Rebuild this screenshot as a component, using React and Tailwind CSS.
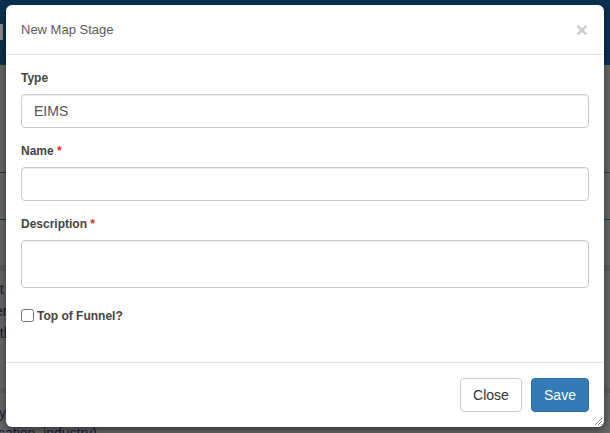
import React from 'react';

const Field = ({ label, required, children, className = '' }) => (
  <div className={className}>
    <label className="block h-[17px] leading-[17px] mb-[7px] text-[12px] font-bold text-[#444]">
      {label}
      {required && <span className="text-[#e02b27]"> *</span>}
    </label>
    {children}
  </div>
);

const ResizeGrip = () => (
  <svg width="9" height="9" viewBox="0 0 9 9" className="absolute right-[1px] bottom-[1px]">
    <path d="M8 1 L1 8 M8 4 L4 8 M8 7 L7 8" stroke="#888" strokeWidth="1" fill="none" />
  </svg>
);

const App = () => {
  return (
    <div className="relative w-[610px] h-[433px] overflow-hidden bg-[#676767] font-['Liberation_Sans',Arial,sans-serif]">
      {/* dimmed page behind the modal */}
      <div className="h-[65px] bg-[#0a3150] pt-[24px]">
        <div className="w-[3px] h-[16px] bg-[#8a8a8a]" />
      </div>
      <div className="h-[107px]" />
      <div className="h-[1px] bg-[#3a3a3a]" />
      <div className="h-[46px]" />
      <div className="h-[1px] bg-[#0b3a5c]" />
      <div className="h-[45px]" />
      <div className="h-[6px] bg-[#5c5c5c]" />
      <div className="text-[14px] leading-[22px] text-[#1c1a33] pt-[7px] whitespace-nowrap">
        <div className="-ml-[8px]">at the</div>
        <div className="-ml-[5px]">ers of</div>
        <div className="-ml-[8px]">oth</div>
      </div>
      <div className="h-[44px]" />
      <div className="h-[5px] bg-[#5c5c5c]" />
      <div className="text-[14px] leading-[20px] text-[#1c1a33] pt-[10px] whitespace-nowrap">
        <div className="-ml-[4px]">ly</div>
        <div className="-ml-[2px]">cation, industry)</div>
      </div>

      {/* modal */}
      <div className="absolute left-[6px] top-[5px] w-[598px] h-[422px] bg-white rounded-[6px] shadow-[0_3px_9px_rgba(0,0,0,0.5)] flex flex-col">
        <div className="flex items-center justify-between px-[15px] py-[15px] border-b border-[#e5e5e5] h-[50px]">
          <h4 className="text-[13px] leading-[19px] text-[#5a5a5a]">New Map Stage</h4>
          <button className="text-[21px] leading-[19px] font-bold text-black opacity-20 mr-[1px]">×</button>
        </div>

        <div className="px-[15px] pt-[15px] pb-[38px] h-[307px]">
          <Field label="Type" className="mb-[15px]">
            <input
              defaultValue="EIMS"
              className="block w-full h-[34px] px-[12px] text-[14px] text-[#555] border border-[#ccc] rounded-[4px] shadow-[inset_0_1px_1px_rgba(0,0,0,0.075)] outline-none"
            />
          </Field>
          <Field label="Name" required className="mb-[15px]">
            <input className="block w-full h-[34px] px-[12px] text-[14px] text-[#555] border border-[#ccc] rounded-[4px] shadow-[inset_0_1px_1px_rgba(0,0,0,0.075)] outline-none" />
          </Field>
          <Field label="Description" required className="mb-[19px]">
            <textarea className="block w-full h-[48px] px-[12px] py-[6px] text-[14px] text-[#555] border border-[#ccc] rounded-[4px] shadow-[inset_0_1px_1px_rgba(0,0,0,0.075)] outline-none resize-none" />
          </Field>
          <label className="flex items-center h-[17px] text-[12px] font-bold text-[#444]">
            <input type="checkbox" className="w-[13px] h-[13px] m-0 mr-[3px]" />
            Top of Funnel?
          </label>
        </div>

        <div className="relative flex justify-end gap-[9px] px-[15px] pt-[15px] pb-[15px] border-t border-[#e5e5e5] h-[65px]">
          <button className="h-[34px] w-[62px] text-[14px] text-[#333] bg-white border border-[#ccc] rounded-[4px]">
            Close
          </button>
          <button className="h-[34px] w-[58px] text-[14px] text-white bg-[#337ab7] border border-[#2e6da4] rounded-[4px]">
            Save
          </button>
          <ResizeGrip />
        </div>
      </div>
    </div>
  );
};

export default App;
